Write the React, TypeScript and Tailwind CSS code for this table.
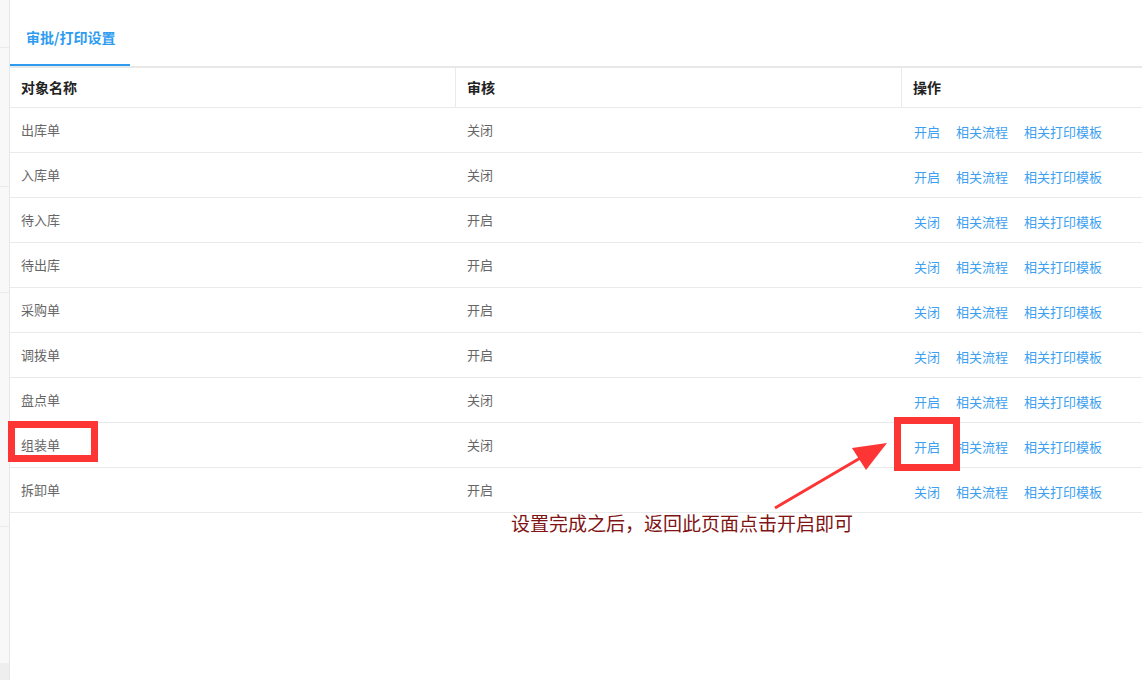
const rows = [
  { name: '出库单', status: '关闭', action: '开启' },
  { name: '入库单', status: '关闭', action: '开启' },
  { name: '待入库', status: '开启', action: '关闭' },
  { name: '待出库', status: '开启', action: '关闭' },
  { name: '采购单', status: '开启', action: '关闭' },
  { name: '调拨单', status: '开启', action: '关闭' },
  { name: '盘点单', status: '关闭', action: '开启' },
  { name: '组装单', status: '关闭', action: '开启' },
  { name: '拆卸单', status: '开启', action: '关闭' },
];

export default function App() {
  return (
    <div
      className="relative flex w-[1142px] h-[680px] overflow-hidden bg-white"
      style={{ fontFamily: '"Noto Sans CJK SC", "Noto Sans", sans-serif' }}
    >
      {/* left sidebar edge */}
      <div className="w-[10px] shrink-0 flex flex-col bg-[#f8f8f8] border-r border-[#e6e7ee]">
        <div className="h-[48px] border-b border-[#ebebeb]" />
        <div className="h-[139px] border-b border-[#ebebeb]" />
        <div className="h-[106px] border-b border-[#ebebeb]" />
        <div className="h-[234px] border-b border-[#ebebeb]" />
        <div className="h-[136px]" />
        <div className="flex-1 bg-[#eeeeee]" />
      </div>

      {/* main panel */}
      <div className="flex-1 flex flex-col">
        <div className="h-[68px] flex items-start border-b-2 border-[#e8e8e8]">
          <div className="w-[120px] h-[66px] border-b-2 border-[#2d9cf0] flex items-center pl-[16px] pt-[10px]">
            <span className="text-[14px] font-semibold text-[#2d9cf0]">审批/打印设置</span>
          </div>
        </div>

        <div className="flex h-[40px] border-b border-[#e8eaec] text-[14px] font-bold text-[#222]">
          <div className="w-[446px] flex items-center pl-[11px] border-r border-[#e8eaec]">对象名称</div>
          <div className="w-[446px] flex items-center pl-[11px] border-r border-[#e8eaec]">审核</div>
          <div className="flex-1 flex items-center pl-[11px]">操作</div>
        </div>

        {rows.map((r) => (
          <div key={r.name} className="flex h-[45px] border-b border-[#e8eaec] text-[13px]">
            <div className="w-[446px] flex items-center pl-[11px] text-[#666]">{r.name}</div>
            <div className="w-[446px] flex items-center pl-[11px] text-[#666]">{r.status}</div>
            <div className="flex-1 flex items-center pl-[12px] pt-[4px] gap-[16px] text-[#3d9ff0]">
              <span>{r.action}</span>
              <span>相关流程</span>
              <span>相关打印模板</span>
            </div>
          </div>
        ))}
      </div>

      {/* annotations */}
      <div className="absolute left-[8px] top-[421px] w-[90px] h-[41px] border-[7px] border-[#fd3535]" />
      <div className="absolute left-[894px] top-[417px] w-[66px] h-[54px] border-[7px] border-[#fd3535]" />
      <svg className="absolute left-0 top-0" width="1142" height="680">
        <line x1="775" y1="508" x2="862" y2="457" stroke="#fd3535" strokeWidth="3" />
        <polygon points="887,443 852,448 866,470" fill="#fd3535" />
      </svg>
      <div className="absolute left-[511px] top-[510px] text-[19px] leading-[26px] text-[#7f1414] whitespace-nowrap">
        设置完成之后，返回此页面点击开启即可
      </div>
    </div>
  );
}
